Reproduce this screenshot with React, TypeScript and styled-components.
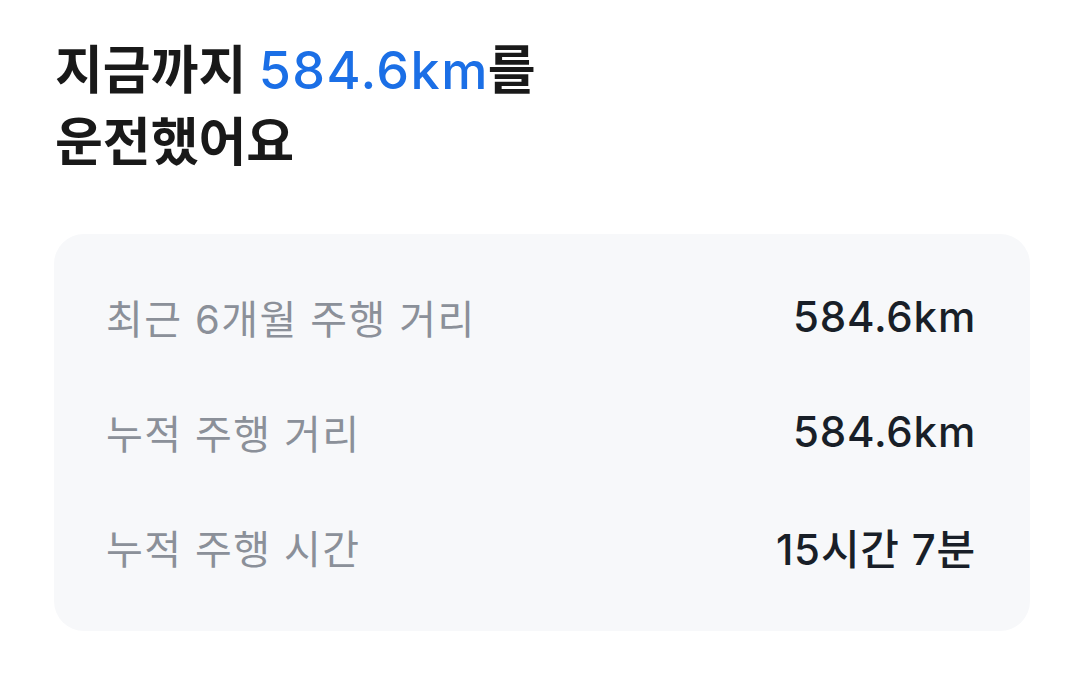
import * as React from 'react';
import styled, { createGlobalStyle } from 'styled-components';

const GlobalStyle = createGlobalStyle`
    html, body {
        margin: 0;
        padding: 0;
        background: #fff;
    }
    body {
        font-family: Inter, "Noto Sans CJK KR", "Noto Sans", sans-serif;
        -webkit-font-smoothing: antialiased;
    }
`;

interface IStat {
    label: string;
    value: string;
}

const stats: IStat[] = [
    { label: '최근 6개월 주행 거리', value: '584.6km' },
    { label: '누적 주행 거리', value: '584.6km' },
    { label: '누적 주행 시간', value: '15시간 7분' },
];

export default function App() {
    return (
        <Page>
            <GlobalStyle />
            <Title>
                지금까지 <Highlight>584.6km</Highlight>를
                <br />
                운전했어요
            </Title>
            <Card>
                {stats.map((s) => (
                    <Row key={s.label}>
                        <Label>{s.label}</Label>
                        <Value>{s.value}</Value>
                    </Row>
                ))}
            </Card>
        </Page>
    );
}

const Page = styled.div`
    width: 1080px;
    height: 683px;
    box-sizing: border-box;
    padding: 35px 50px 0 54px;
    display: flex;
    flex-direction: column;
`;

const Title = styled.h1`
    margin: 0 0 0 1px;
    font-size: 52px;
    line-height: 72px;
    font-weight: 700;
    color: #191919;
    letter-spacing: 0;
`;

const Highlight = styled.span`
    color: #1b6fe6;
    font-weight: 500;
    letter-spacing: 1.5px;
    margin-right: -1px;
`;

const Card = styled.div`
    margin-top: 55px;
    background: #f7f8fa;
    border-radius: 30px;
    padding: 25px 54px 27px 52px;
    display: flex;
    flex-direction: column;
`;

const Row = styled.div`
    display: flex;
    justify-content: space-between;
    align-items: center;
    height: 115px;
`;

const Label = styled.div`
    font-size: 40px;
    font-weight: 400;
    color: #8b9099;
    letter-spacing: 1.4px;
`;

const Value = styled.div`
    font-size: 42px;
    font-weight: 500;
    color: #191f28;
    letter-spacing: 0.8px;
`;
